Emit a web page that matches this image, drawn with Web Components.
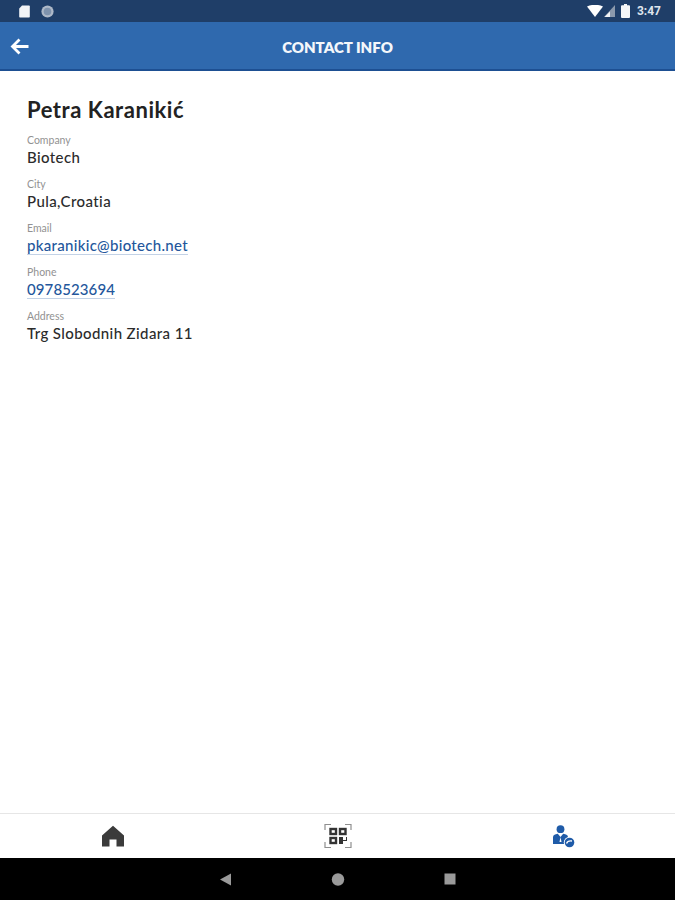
<!DOCTYPE html>
<html>
  <head>
    <meta charset="utf-8">
    <title>Contact Info</title>
    <style>
      html, body { margin: 0; padding: 0; background: #fff; }
      body { font-family: Lato, "Open Sans", sans-serif; }
      #app { display: flex; flex-direction: column; height: 900px; width: 675px; overflow: hidden; }
    </style>
  </head>
  <body>
    <div id="app">
      <status-bar></status-bar>
      <app-bar>CONTACT INFO</app-bar>
      <contact-card>
        <span slot="name">Petra Karanikić</span>
        <contact-field label="Company">Biotech</contact-field>
        <contact-field label="City">Pula,Croatia</contact-field>
        <contact-field label="Email" link style="--track: .3px">pkaranikic@biotech.net</contact-field>
        <contact-field label="Phone" link style="--track: .1px">0978523694</contact-field>
        <contact-field label="Address">Trg Slobodnih Zidara 11</contact-field>
      </contact-card>
      <bottom-tabs></bottom-tabs>
      <system-nav></system-nav>
    </div>

    <script>
      function define(name, html) {
        customElements.define(name, class extends HTMLElement {
          constructor() {
            super();
            this.attachShadow({mode: 'open'}).innerHTML = html;
          }
        });
      }

      define('status-bar', `
        <style>
          :host { display: flex; flex: none; height: 22px; background: #1f3e68; align-items: center; padding: 0 14px 0 19px; color: #fff; }
          svg { display: block; }
          .left { display: flex; align-items: center; gap: 11px; flex: 1; }
          .right { display: flex; align-items: center; }
          .time { font: 700 12px/1 Roboto, sans-serif; color: #dfe5ed; margin-left: 7px; }
        </style>
        <div class="left">
          <svg width="11" height="13" viewBox="0 0 11 13"><path d="M3 0.5H10a.8.8 0 0 1 .8.8V11.7a.8.8 0 0 1-.8.8H1a.8.8 0 0 1-.8-.8V3.4Z" fill="#f2f4f7"/></svg>
          <svg width="13" height="13" viewBox="0 0 13 13"><circle cx="6.500" cy="6.500" r="6.100" fill="#aeb9c8"/><circle cx="6.500" cy="6.500" r="3.800" fill="#7f93ad"/></svg>
        </div>
        <div class="right">
          <svg width="16" height="12" viewBox="0 0 16 12" style="margin-right:1px"><path d="M0 1.500Q8-2 16 1.500L8 12Z" fill="#fff"/></svg>
          <svg width="11" height="12" viewBox="0 0 11 12" style="margin-right:6px"><path d="M11 0V12H0Z" fill="#8b99ac"/><path d="M6 6.500V12H.5Z" fill="#f2f4f7"/></svg>
          <svg width="9" height="14" viewBox="0 0 9 14"><path d="M3 0H6V1.200H8a1 1 0 0 1 1 1V13a1 1 0 0 1-1 1H1a1 1 0 0 1-1-1V2.200a1 1 0 0 1 1-1H3Z" fill="#f4f6f8"/></svg>
          <span class="time">3:47</span>
        </div>`);

      define('app-bar', `
        <style>
          :host { display: flex; flex: none; box-sizing: border-box; height: 49px; padding-top: 3px; background: #2f69ae; border-bottom: 2px solid #1d4f92; align-items: center; justify-content: center; position: relative; color: #f4f7fb; font: 800 15px/1 Lato, sans-serif; }
          svg { position: absolute; left: 10px; top: 16px; }
        </style>
        <svg width="19" height="17" viewBox="0 0 19 17"><path d="M18.500 8.500H3M9.500 1.500 2.500 8.500l7 7" fill="none" stroke="#fff" stroke-width="2.800"/></svg>
        <slot></slot>`);

      define('contact-card', `
        <style>
          :host { display: flex; flex-direction: column; flex: 1; padding: 26px 27px 0; background: #fff; }
          .name { font: 700 22px/26px Lato, sans-serif; color: #222; letter-spacing: .55px; margin-bottom: 10px; }
          .rows { display: flex; flex-direction: column; gap: 10px; }
        </style>
        <div class="name"><slot name="name"></slot></div>
        <div class="rows"><slot></slot></div>`);

      customElements.define('contact-field', class extends HTMLElement {
        constructor() {
          super();
          const root = this.attachShadow({mode: 'open'});
          root.innerHTML = `
            <style>
              :host { display: block; height: 34px; }
              .label { font: 400 10.500px/14px Lato, sans-serif; color: #929292; }
              .value { font: 500 15px/20px Lato, sans-serif; letter-spacing: var(--track, .4px); color: #2b2b2b; }
              :host([link]) .value { color: #24579c; }
              :host([link]) .value span { border-bottom: 1px solid #c3d2e6; }
            </style>
            <div class="label"></div>
            <div class="value"><span><slot></slot></span></div>`;
          root.querySelector('.label').textContent = this.getAttribute('label');
        }
      });

      define('bottom-tabs', `
        <style>
          :host { display: grid; grid-template-columns: repeat(3, 1fr); flex: none; height: 44px; border-top: 1px solid #e6e6e6; background: #fff; }
          div { display: flex; align-items: center; justify-content: center; }
        </style>
        <div><svg width="24" height="22" viewBox="0 0 24 22"><path d="M12 .8 23 10.500V21.500H15.500V14.500H8.500V21.500H1V10.500Z" fill="#3b3b3b"/></svg></div>
        <div><svg width="28" height="26" viewBox="0 0 28 26" fill="none">
          <path d="M1 7V1.500H7M21 1.500H27V7M1 19V24.500H7M21 24.500H27V19" stroke="#8f8f8f" stroke-width="1.200"/>
          <g stroke="#333" stroke-width="2.400"><rect x="6.500" y="6" width="5.500" height="5"/><rect x="16" y="6" width="5.500" height="5"/><rect x="6.500" y="15" width="5.500" height="5"/></g>
          <path d="M15 14H19V17H22V14H23V18H19V21H15Z" fill="#333"/>
        </svg></div>
        <div><svg width="24" height="23" viewBox="0 0 24 23">
          <circle cx="9.500" cy="4.200" r="3.900" fill="#1f5ba8"/>
          <path d="M2 19V12Q2 10 4 9.500L6.800 8.800 9.500 12 12.200 8.800 15 9.500Q17 10 17 12V19Z" fill="#1f5ba8"/>
          <path d="M9.500 12 8.500 17H10.500Z" fill="#fff"/>
          <circle cx="18.500" cy="17.500" r="5.700" fill="#fff"/>
          <circle cx="18.500" cy="17.500" r="4.800" fill="#1f5ba8"/>
          <path d="M15.500 18.500Q16.500 15.500 21 16" stroke="#fff" stroke-width="1.300" fill="none"/>
        </svg></div>`);

      define('system-nav', `
        <style>
          :host { display: flex; flex: none; height: 42px; background: #000; align-items: center; justify-content: center; position: relative; }
          svg { position: absolute; top: 15px; }
        </style>
        <svg style="left:219px" width="13" height="13" viewBox="0 0 13 13"><path d="M1 6.500 12 .5V12.500Z" fill="#9a9a9a"/></svg>
        <svg style="left:331px" width="14" height="13" viewBox="0 0 14 13"><circle cx="7" cy="6.500" r="6.200" fill="#9a9a9a"/></svg>
        <svg style="left:444px" width="12" height="12" viewBox="0 0 12 12"><rect x=".5" y=".5" width="11" height="11" fill="#9a9a9a"/></svg>`);
    </script>
  </body>
</html>
